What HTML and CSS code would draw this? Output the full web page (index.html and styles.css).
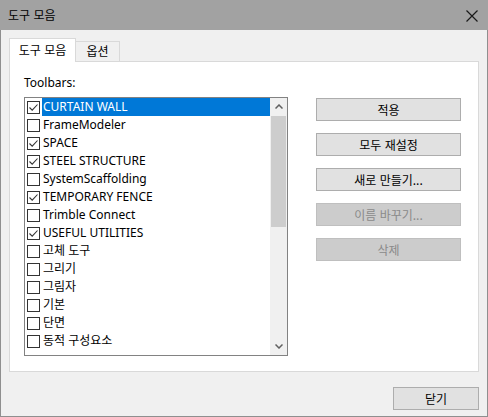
FILE: index.html
```html
<!DOCTYPE html>
<html lang="ko">
<head>
<meta charset="utf-8">
<title>도구 모음</title>
<link rel="stylesheet" href="styles.css">
</head>
<body>
<div class="window">
  <div class="titlebar">
    <span class="title">도구 모음</span>
    <svg class="close" width="12" height="12" viewBox="0 0 12 12"><path d="M0.5 0.5 L11.5 11.5 M11.5 0.5 L0.5 11.5" stroke="#1a1a1a" stroke-width="1.2" fill="none"/></svg>
  </div>
  <div class="body">
    <div class="tabs">
      <div class="tab active">도구 모음</div>
      <div class="tab">옵션</div>
    </div>
    <div class="panel">
      <div class="left">
        <div class="label">Toolbars:</div>
        <div class="listbox">
          <div class="items">
            <div class="row selected"><span class="cb checked"><svg viewBox="0 0 11 11"><polyline points="1.5,5.5 4.2,8.2 9.5,2.5"/></svg></span><span class="txt">CURTAIN WALL</span></div>
            <div class="row"><span class="cb"></span><span class="txt">FrameModeler</span></div>
            <div class="row"><span class="cb checked"><svg viewBox="0 0 11 11"><polyline points="1.5,5.5 4.2,8.2 9.5,2.5"/></svg></span><span class="txt">SPACE</span></div>
            <div class="row"><span class="cb checked"><svg viewBox="0 0 11 11"><polyline points="1.5,5.5 4.2,8.2 9.5,2.5"/></svg></span><span class="txt">STEEL STRUCTURE</span></div>
            <div class="row"><span class="cb"></span><span class="txt">SystemScaffolding</span></div>
            <div class="row"><span class="cb checked"><svg viewBox="0 0 11 11"><polyline points="1.5,5.5 4.2,8.2 9.5,2.5"/></svg></span><span class="txt">TEMPORARY FENCE</span></div>
            <div class="row"><span class="cb"></span><span class="txt">Trimble Connect</span></div>
            <div class="row"><span class="cb checked"><svg viewBox="0 0 11 11"><polyline points="1.5,5.5 4.2,8.2 9.5,2.5"/></svg></span><span class="txt">USEFUL UTILITIES</span></div>
            <div class="row"><span class="cb"></span><span class="txt">고체 도구</span></div>
            <div class="row"><span class="cb"></span><span class="txt">그리기</span></div>
            <div class="row"><span class="cb"></span><span class="txt">그림자</span></div>
            <div class="row"><span class="cb"></span><span class="txt">기본</span></div>
            <div class="row"><span class="cb"></span><span class="txt">단면</span></div>
            <div class="row"><span class="cb"></span><span class="txt">동적 구성요소</span></div>
          </div>
          <div class="scrollbar">
            <div class="arrow"><svg width="8" height="5" viewBox="0 0 8 5"><polyline points="0.5,4.5 4,1 7.5,4.5"/></svg></div>
            <div class="track"><div class="thumb"></div></div>
            <div class="arrow"><svg width="8" height="5" viewBox="0 0 8 5"><polyline points="0.5,0.5 4,4 7.5,0.5"/></svg></div>
          </div>
        </div>
      </div>
      <div class="buttons">
        <div class="btn">적용</div>
        <div class="btn">모두 재설정</div>
        <div class="btn">새로 만들기...</div>
        <div class="btn disabled">이름 바꾸기...</div>
        <div class="btn disabled">삭제</div>
      </div>
    </div>
    <div class="footer">
      <div class="btn close-btn">닫기</div>
    </div>
  </div>
</div>
</body>
</html>
```
FILE: styles.css
```css
* { box-sizing: border-box; }
html, body { margin: 0; padding: 0; }
body {
  width: 488px;
  height: 417px;
  background: #f0f0f0;
  font-family: "Noto Sans", "Noto Sans CJK KR", sans-serif;
  font-size: 12px;
  color: #000;
}
.window {
  width: 488px;
  height: 417px;
  background: #f0f0f0;
  border-left: 1px solid #8f8f8f;
  border-right: 1px solid #8f8f8f;
  border-bottom: 1px solid #8f8f8f;
  display: flex;
  flex-direction: column;
}
.titlebar {
  height: 30px;
  margin: 0 -1px;
  background: #a2a2a2;
  display: flex;
  align-items: center;
  justify-content: space-between;
  padding: 0 10px 0 8px;
}
.title {
  font-family: "Noto Sans CJK KR", sans-serif;
  font-size: 12px;
  line-height: 30px;
}
.close { display: block; margin-top: 2px; }
.body {
  padding: 8px 8px 0 8px;
  display: flex;
  flex-direction: column;
}
.tabs {
  display: flex;
  align-items: flex-end;
  height: 23px;
  position: relative;
  z-index: 1;
}
.tab {
  font-family: "Noto Sans CJK KR", sans-serif;
  height: 20px;
  line-height: 18px;
  padding: 0 6px;
  border: 1px solid #d9d9d9;
  border-bottom: none;
  border-left: none;
  background: #f0f0f0;
  width: 44px;
  text-align: center;
}
.tab.active {
  width: 67px;
  height: 24px;
  line-height: 22px;
  margin-bottom: -1px;
  background: #fff;
  border-left: 1px solid #d9d9d9;
}
.panel {
  height: 311px;
  background: #fff;
  border: 1px solid #d9d9d9;
  display: flex;
  padding: 12px 0 0 14px;
}
.left { width: 264px; }
.label { line-height: 18px; height: 18px; margin-bottom: 5px; }
.listbox {
  width: 264px;
  height: 259px;
  border: 1px solid #828282;
  display: flex;
}
.items { flex: 1; padding-top: 0; }
.row {
  height: 18px;
  display: flex;
  align-items: center;
  padding-left: 2px;
  font-family: "Noto Sans", "Noto Sans CJK KR", sans-serif;
}
.cb {
  width: 13px;
  height: 13px;
  border: 1px solid #333;
  background: #fff;
  margin-right: 2px;
  flex: none;
  display: flex;
  align-items: center;
  justify-content: center;
}
.cb svg { width: 11px; height: 11px; display: block; }
.cb polyline { fill: none; stroke: #333; stroke-width: 1.1; }
.txt {
  flex: 1;
  height: 18px;
  line-height: 18px;
  padding-left: 1px;
  white-space: nowrap;
}
.row.selected .txt { background: #0078d7; color: #fff; }
.scrollbar {
  width: 17px;
  background: #f0f0f0;
  display: flex;
  flex-direction: column;
}
.arrow {
  height: 17px;
  display: flex;
  align-items: center;
  justify-content: center;
}
.arrow polyline { fill: none; stroke: #606060; stroke-width: 1.5; }
.track { flex: 1; padding-top: 1px; }
.thumb { height: 111px; margin: 0 1px; background: #cdcdcd; }
.buttons {
  width: 145px;
  margin-left: 28px;
  padding-top: 24px;
  display: flex;
  flex-direction: column;
  gap: 12px;
}
.btn {
  height: 23px;
  line-height: 21px;
  border: 1px solid #adadad;
  background: #e1e1e1;
  text-align: center;
  font-family: "Noto Sans CJK KR", sans-serif;
  font-size: 12px;
}
.btn.disabled {
  background: #cccccc;
  border-color: #bfbfbf;
  color: #8a8a8a;
}
.footer {
  display: flex;
  justify-content: flex-end;
  padding-top: 15px;
}
.close-btn { width: 86px; }
```
